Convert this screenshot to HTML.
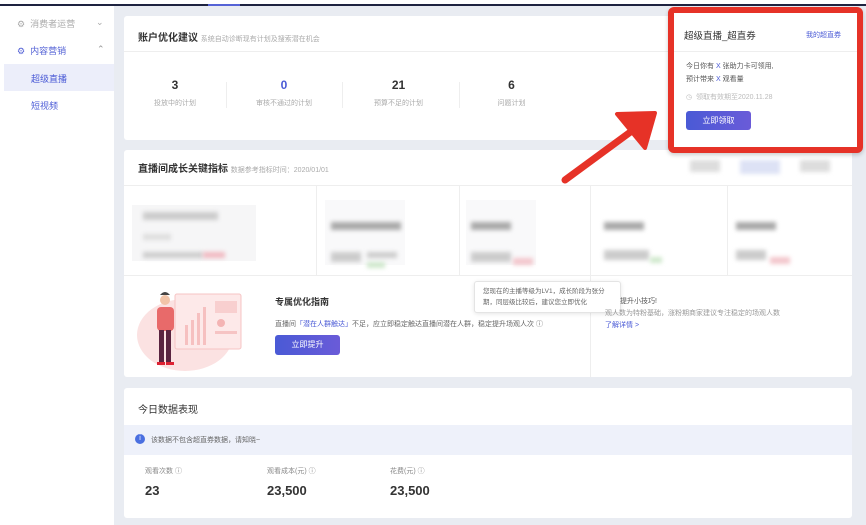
<!DOCTYPE html>
<html><head><meta charset="utf-8"><style>
*{margin:0;padding:0;box-sizing:border-box}
body{width:866px;height:525px;overflow:hidden;background:#fff;font-family:"Liberation Sans","Noto Sans CJK SC",sans-serif;position:relative;color:#333}
.a{position:absolute}
.card{position:absolute;background:#fff;border-radius:3px}
.t{font-size:10px;color:#333;white-space:nowrap}
.s{font-size:7px;color:#aaa;white-space:nowrap}
.bl{position:absolute;background:#ccc;filter:blur(2px)}
.bx{position:absolute;background:#f6f6f7}
.btn{position:absolute;background:linear-gradient(90deg,#4a5ad6,#6a5bd8);color:#fff;font-size:8px;text-align:center;border-radius:3px}
.num{font-weight:bold;font-size:12px;color:#333;text-align:center}
</style></head><body>
<div class="a" style="left:0;top:4px;width:866px;height:2px;background:#1e2340"></div>
<div class="a" style="left:208px;top:4px;width:32px;height:2px;background:#5563d6"></div>
<div class="a" style="left:114px;top:6px;width:752px;height:519px;background:#e9ecf2"></div>
<!-- sidebar -->
<div class="a s" style="left:17px;top:17px;font-size:9px;color:#aaa">⚙ &nbsp;消费者运营</div>
<div class="a s" style="left:96px;top:17px;font-size:9px">⌄</div>
<div class="a" style="left:17px;top:44px;font-size:9px;color:#5563d6">⚙ &nbsp;内容营销</div>
<div class="a" style="left:97px;top:44px;font-size:9px;color:#999">⌃</div>
<div class="a" style="left:4px;top:64px;width:110px;height:27px;background:#eceefa"></div>
<div class="a" style="left:31px;top:72px;font-size:9px;color:#4a5ad6">超级直播</div>
<div class="a" style="left:31px;top:99px;font-size:9px;color:#4a5ad6">短视频</div>
<!-- card1 -->
<div class="card" style="left:124px;top:16px;width:728px;height:124px"></div>
<div class="a" style="left:124px;top:51px;width:728px;height:1px;background:#eee"></div>
<div class="a t" style="left:138px;top:29px;font-weight:bold">账户优化建议 <span class="s" style="font-weight:normal">系统自动诊断现有计划及搜索潜在机会</span></div>
<div class="a" style="left:124px;top:78px;width:460px">
 <div class="a" style="left:0;width:102px"><div class="num">3</div><div class="s" style="text-align:center;margin-top:6px">投放中的计划</div></div>
 <div class="a" style="left:102px;width:116px"><div class="num" style="color:#4a5ad6">0</div><div class="s" style="text-align:center;margin-top:6px">审核不通过的计划</div></div>
 <div class="a" style="left:218px;width:113px"><div class="num">21</div><div class="s" style="text-align:center;margin-top:6px">预算不足的计划</div></div>
 <div class="a" style="left:331px;width:113px"><div class="num">6</div><div class="s" style="text-align:center;margin-top:6px">问题计划</div></div>
</div>
<div class="a" style="left:226px;top:82px;width:1px;height:26px;background:#eee"></div>
<div class="a" style="left:342px;top:82px;width:1px;height:26px;background:#eee"></div>
<div class="a" style="left:459px;top:82px;width:1px;height:26px;background:#eee"></div>
<!-- card2 -->
<div class="card" style="left:124px;top:150px;width:728px;height:227px"></div>
<div class="a" style="left:124px;top:185px;width:728px;height:1px;background:#eee"></div>
<div class="a t" style="left:138px;top:160px;font-weight:bold">直播间成长关键指标 <span class="s" style="font-weight:normal">数据参考指标时间：2020/01/01</span></div>
<div class="a" style="left:124px;top:275px;width:728px;height:1px;background:#eee"></div>
<div class="a" style="left:316px;top:186px;width:1px;height:89px;background:#eee"></div>
<div class="a" style="left:459px;top:186px;width:1px;height:89px;background:#eee"></div>
<div class="a" style="left:590px;top:186px;width:1px;height:191px;background:#eee"></div>
<div class="a" style="left:727px;top:186px;width:1px;height:89px;background:#eee"></div>
<div class="bx" style="left:132px;top:205px;width:124px;height:56px"></div>
<div class="bx" style="left:325px;top:200px;width:80px;height:65px;background:#f9f9fa"></div>
<div class="bx" style="left:466px;top:200px;width:70px;height:65px;background:#f9f9fa"></div>
<div class="bl" style="left:143px;top:212px;width:75px;height:8px"></div>
<div class="bl" style="left:143px;top:234px;width:28px;height:6px;background:#ddd"></div>
<div class="bl" style="left:143px;top:252px;width:60px;height:6px"></div>
<div class="bl" style="left:203px;top:252px;width:22px;height:6px;background:#f0b8c0"></div>
<div class="bl" style="left:331px;top:222px;width:70px;height:8px;background:#aaa"></div>
<div class="bl" style="left:331px;top:252px;width:30px;height:10px"></div>
<div class="bl" style="left:367px;top:252px;width:30px;height:6px"></div>
<div class="bl" style="left:367px;top:262px;width:18px;height:6px;background:#cfe8cc"></div>
<div class="bl" style="left:471px;top:222px;width:40px;height:8px;background:#aaa"></div>
<div class="bl" style="left:471px;top:252px;width:40px;height:10px"></div>
<div class="bl" style="left:513px;top:258px;width:20px;height:7px;background:#f3c6cc"></div>
<div class="bl" style="left:604px;top:222px;width:40px;height:8px;background:#aaa"></div>
<div class="bl" style="left:604px;top:250px;width:45px;height:10px"></div>
<div class="bl" style="left:650px;top:257px;width:12px;height:6px;background:#cfe8cc"></div>
<div class="bl" style="left:736px;top:222px;width:40px;height:8px;background:#aaa"></div>
<div class="bl" style="left:736px;top:250px;width:30px;height:10px"></div>
<div class="bl" style="left:770px;top:257px;width:20px;height:7px;background:#f3c6cc"></div>
<div class="bl" style="left:690px;top:160px;width:30px;height:12px;background:#ddd"></div>
<div class="bl" style="left:740px;top:160px;width:40px;height:14px;background:#dde2f5"></div>
<div class="bl" style="left:800px;top:160px;width:30px;height:12px;background:#ddd"></div>
<!-- illustration -->
<svg class="a" style="left:135px;top:285px" width="115" height="92">
<ellipse cx="50" cy="50" rx="48" ry="36" fill="#fbe2e2"/>
<rect x="40" y="9" width="66" height="55" rx="2" fill="#fde9e9" stroke="#f6c4c4"/>
<rect x="80" y="16" width="22" height="12" fill="#f8cfcf"/>
<circle cx="86" cy="38" r="4" fill="#f4b4b4"/>
<rect x="80" y="46" width="22" height="3" fill="#f6c4c4"/>
<g fill="#f6c0c0"><rect x="50" y="40" width="3" height="20"/><rect x="56" y="35" width="3" height="25"/><rect x="62" y="28" width="3" height="32"/><rect x="68" y="22" width="3" height="38"/></g>
<circle cx="30" cy="15" r="5" fill="#f2c4a8"/>
<path d="M25 10 q5-6 10 0" fill="#444"/>
<rect x="22" y="22" width="17" height="24" rx="4" fill="#e86a6a"/>
<rect x="24" y="45" width="5" height="33" fill="#5a2440"/><rect x="31" y="45" width="5" height="33" fill="#5a2440"/>
<rect x="22" y="77" width="8" height="3" fill="#d23"/><rect x="31" y="77" width="8" height="3" fill="#d23"/>
</svg>
<div class="a t" style="left:275px;top:295px;font-weight:bold;font-size:9px">专属优化指南</div>
<div class="a s" style="left:275px;top:319px;color:#666">直播间<span style="color:#4a5ad6">「潜在人群触达」</span>不足，应立即稳定触达直播间潜在人群，稳定提升场观人次 ⓘ</div>
<div class="btn" style="left:275px;top:335px;width:65px;height:20px;line-height:20px">立即提升</div>
<div class="a" style="left:474px;top:281px;width:147px;height:32px;background:#fff;border:1px solid #e4e4e4;border-radius:3px;box-shadow:0 1px 4px rgba(0,0,0,.1);padding:4px 8px;font-size:6.5px;color:#666;line-height:11px">您现在的主播等级为LV1，成长阶段为张分期，同层级比较后，建议您立即优化</div>
<div class="a s" style="left:620px;top:296px;color:#555">提升小技巧!</div>
<div class="a s" style="left:605px;top:308px;color:#999">观人数为特粉基础，涨粉期商家建议专注稳定的场观人数</div>
<div class="a s" style="left:605px;top:320px;color:#4a5ad6">了解详情 &gt;</div>
<!-- card3 -->
<div class="card" style="left:124px;top:388px;width:728px;height:130px"></div>
<div class="a t" style="left:138px;top:401px">今日数据表现</div>
<div class="a" style="left:124px;top:425px;width:728px;height:30px;background:#eef1fa"></div>
<div class="a" style="left:135px;top:434px;width:10px;height:10px;border-radius:50%;background:#4a6fe0;color:#fff;font-size:7px;text-align:center;line-height:10px">i</div>
<div class="a s" style="left:151px;top:435px;color:#666">该数据不包含超直券数据，请知晓~</div>
<div class="a s" style="left:145px;top:466px;color:#888">观看次数 ⓘ</div>
<div class="a s" style="left:267px;top:466px;color:#888">观看成本(元) ⓘ</div>
<div class="a s" style="left:390px;top:466px;color:#888">花费(元) ⓘ</div>
<div class="a" style="left:145px;top:483px;font-size:13px;font-weight:bold">23</div>
<div class="a" style="left:267px;top:483px;font-size:13px;font-weight:bold">23,500</div>
<div class="a" style="left:390px;top:483px;font-size:13px;font-weight:bold">23,500</div>
<!-- red popup -->
<div class="a" style="left:668px;top:7px;width:195px;height:146px;border:6px solid #e63227;border-radius:6px;background:#fff;box-shadow:0 2px 4px rgba(0,0,0,.2)"></div>
<div class="a t" style="left:684px;top:28px;font-size:9.5px">超级直播_超直券</div>
<div class="a" style="left:806px;top:30px;font-size:7px;color:#4a5ad6">我的超直券</div>
<div class="a" style="left:674px;top:51px;width:183px;height:1px;background:#eee"></div>
<div class="a s" style="left:686px;top:61px;color:#555">今日你有 <span style="color:#4a5ad6">X</span> 张助力卡可领用,</div>
<div class="a s" style="left:686px;top:74px;color:#555">预计带来 <span style="color:#4a5ad6">X</span> 观看量</div>
<div class="a s" style="left:686px;top:92px;color:#bbb">◷ &nbsp;领取有效期至2020.11.28</div>
<div class="btn" style="left:686px;top:111px;width:65px;height:19px;line-height:19px">立即领取</div>
<!-- arrow -->
<svg class="a" style="left:555px;top:100px" width="110" height="90">
<line x1="10" y1="80" x2="85" y2="25" stroke="#e63227" stroke-width="7" stroke-linecap="round"/>
<path d="M62 14 L100 13 L90 48 Z" fill="#e63227" stroke="#e63227" stroke-width="4" stroke-linejoin="round"/>
</svg>
</body></html>
